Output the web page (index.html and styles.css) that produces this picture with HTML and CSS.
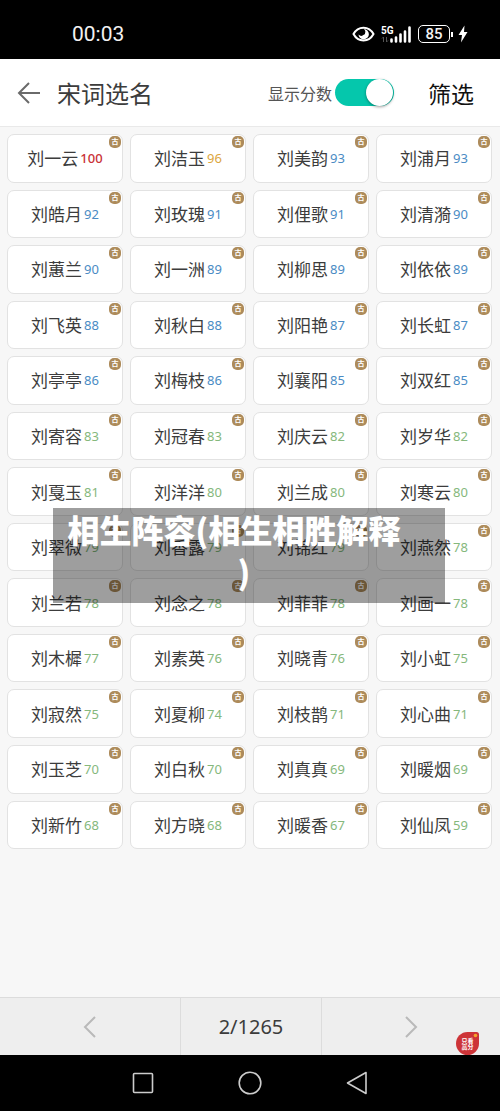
FILE: index.html
```html
<!DOCTYPE html>
<html lang="zh-CN">
<head>
  <meta charset="UTF-8">
  <meta name="viewport" content="width=device-width, initial-scale=1.0">
  <title>宋词选名</title>
  <link rel="stylesheet" href="styles.css">
</head>
<body>
  <div class="status-bar">
    <span class="clock">00:03</span>
    <div class="status-icons">
      <svg width="23" height="16" viewBox="0 0 23 16">
        <path d="M1.500 8C6 -0.500 17 -0.500 21.500 8C17 16.500 6 16.500 1.500 8Z" fill="none" stroke="#fff" stroke-width="2"/>
        <path d="M12 3a5.200 5.200 0 1 1-5.500 5.500a3.500 3.500 0 0 0 5.500-5.500Z" fill="#fff"/>
        <circle cx="12" cy="7.500" r="1" fill="#000"/>
      </svg>
      <svg width="31" height="18" viewBox="0 0 31 18">
        <text class="network" x="0" y="9">5G</text>
        <path d="M2.500 17v-5M1 13.500l1.500-1.500M5.500 12v5M7 15.500l-1.500 1.500" fill="none" stroke="#555"/>
        <path d="M10.500 16.500v-2M15 16.500v-4M19.500 16.500v-7M24 16.500v-10M28.500 16.500v-14" stroke="#fff" stroke-width="2.600" stroke-linecap="round"/>
      </svg>
      <span class="battery">85</span>
      <svg width="10" height="18" viewBox="0 0 10 18">
        <path d="M6.500 0.500L0.500 10H4L3 17.500L9.500 7H6Z" fill="#fff"/>
      </svg>
    </div>
  </div>

  <header class="header">
    <button class="back" type="button" aria-label="返回">
      <svg width="24" height="24" viewBox="0 0 24 24">
        <path d="M23 12H2M12 2L2 12L12 22" fill="none" stroke="#6a6a6a" stroke-width="2"/>
      </svg>
    </button>
    <h1>宋词选名</h1>
    <label class="score-label" for="showScore">显示分数</label>
    <input class="switch" type="checkbox" id="showScore" checked>
    <button class="filter" type="button">筛选</button>
  </header>

  <main class="content">
    <ul class="names" id="names"></ul>
  </main>

  <div class="caption"><span class="caption-line">相生阵容(相生相胜解释</span><br>)</div>

  <footer class="pager">
    <button class="prev" type="button" aria-label="上一页">
      <svg width="14" height="22" viewBox="0 0 14 22">
        <path d="M12 1L2 11L12 21" fill="none" stroke="#b9b9b9" stroke-width="2"/>
      </svg>
    </button>
    <span class="page">2/1265</span>
    <button class="next" type="button" aria-label="下一页">
      <svg width="14" height="22" viewBox="0 0 14 22">
        <path d="M2 1L12 11L2 21" fill="none" stroke="#b9b9b9" stroke-width="2"/>
      </svg>
    </button>
    <button class="high-score" type="button">
      <svg width="23" height="23" viewBox="0 0 23 23">
        <path d="M11.500 0H20.500Q23 0 23 2.500V11.500A11.500 11.500 0 1 1 11.500 0Z" fill="#cd3438"/>
        <circle cx="19.500" cy="3.500" r="1.800" fill="#f4a52a"/>
        <text x="11.500" y="11">只看</text>
        <text x="11.500" y="17">高分</text>
      </svg>
    </button>
  </footer>

  <nav class="system-nav">
    <button type="button" aria-label="最近任务">
      <svg width="24" height="24" viewBox="0 0 24 24"><rect x="2.500" y="2.500" width="19" height="19" rx="1" fill="none" stroke="#ccc" stroke-width="1.600"/></svg>
    </button>
    <button type="button" aria-label="主页">
      <svg width="24" height="24" viewBox="0 0 24 24"><circle cx="12" cy="12" r="10.800" fill="none" stroke="#ccc" stroke-width="1.600"/></svg>
    </button>
    <button type="button" aria-label="后退">
      <svg width="24" height="24" viewBox="0 0 24 24"><path d="M21 1.500V22.500L2.500 12Z" fill="none" stroke="#ccc" stroke-width="1.600" stroke-linejoin="round"/></svg>
    </button>
  </nav>

  <script>
    const names = [
      ['刘一云', 100], ['刘洁玉', 96], ['刘美韵', 93], ['刘浦月', 93],
      ['刘皓月', 92], ['刘玫瑰', 91], ['刘俚歌', 91], ['刘清漪', 90],
      ['刘蕙兰', 90], ['刘一洲', 89], ['刘柳思', 89], ['刘依依', 89],
      ['刘飞英', 88], ['刘秋白', 88], ['刘阳艳', 87], ['刘长虹', 87],
      ['刘亭亭', 86], ['刘梅枝', 86], ['刘襄阳', 85], ['刘双红', 85],
      ['刘寄容', 83], ['刘冠春', 83], ['刘庆云', 82], ['刘岁华', 82],
      ['刘戛玉', 81], ['刘洋洋', 80], ['刘兰成', 80], ['刘寒云', 80],
      ['刘翠微', 79], ['刘香露', 79], ['刘锦红', 79], ['刘燕然', 78],
      ['刘兰若', 78], ['刘念之', 78], ['刘菲菲', 78], ['刘画一', 78],
      ['刘木樨', 77], ['刘素英', 76], ['刘晓青', 76], ['刘小虹', 75],
      ['刘寂然', 75], ['刘夏柳', 74], ['刘枝鹊', 71], ['刘心曲', 71],
      ['刘玉芝', 70], ['刘白秋', 70], ['刘真真', 69], ['刘暖烟', 69],
      ['刘新竹', 68], ['刘方晓', 68], ['刘暖香', 67], ['刘仙凤', 59]
    ];

    // 分数对应的颜色
    function level(score) {
      if (score === 100) return 'top';
      if (score > 95) return 'gold';
      if (score > 84) return 'blue';
      return 'green';
    }

    const list = document.getElementById('names');

    names.forEach(([name, score]) => {
      const item = document.createElement('li');
      item.innerHTML = `
        <a class="card" href="#">
          <span class="name">${name}</span>
          <span class="score ${level(score)}">${score}</span>
          <span class="badge">古</span>
        </a>
      `;
      list.appendChild(item);
    });

    // 显示或隐藏分数
    document.getElementById('showScore').addEventListener('change', function() {
      list.classList.toggle('no-scores', !this.checked);
    });
  </script>
</body>
</html>
```
FILE: styles.css
```css
* {
  box-sizing: border-box;
}
body {
  position: relative;
  display: flex;
  flex-direction: column;
  min-height: 100vh;
  margin: 0;
  background-color: #f7f7f7;
  color: #3c3c3c;
  font-family: "Noto Sans", "Noto Sans CJK SC", sans-serif;
}
button {
  padding: 0;
  border: none;
  background: none;
  color: inherit;
  font-family: inherit;
  cursor: pointer;
}
svg {
  display: block;
}
.status-bar {
  display: flex;
  align-items: center;
  justify-content: space-between;
  height: 59px;
  padding: 9px 32px 0 72px;
  background-color: #000;
  color: #f2f2f2;
}
.clock {
  font-family: Roboto, sans-serif;
  font-size: 21px;
}
.status-icons {
  display: flex;
  align-items: center;
  gap: 6px;
}
.network {
  fill: #fff;
  font-family: Roboto, sans-serif;
  font-size: 10px;
  font-weight: bold;
}
.battery {
  position: relative;
  width: 32px;
  margin-right: 2px;
  border: 1px solid #fff;
  border-radius: 5px;
  font-family: Roboto, sans-serif;
  font-size: 15px;
  font-weight: 500;
  line-height: 16px;
  text-align: center;
}
.battery::after {
  content: "";
  position: absolute;
  top: 6px;
  right: -4px;
  width: 2px;
  height: 5px;
  background-color: #fff;
}
.header {
  display: flex;
  align-items: center;
  height: 68px;
  padding: 0 26px 0 17px;
  border-bottom: 1px solid #e9e9e9;
  background-color: #fff;
}
.header h1 {
  margin: 0 auto 0 16px;
  font-size: 24px;
  font-weight: normal;
}
.score-label {
  color: #555;
  font-size: 16px;
}
.switch {
  appearance: none;
  width: 59px;
  height: 27px;
  margin: 0 34px 0 3px;
  border-radius: 14px;
  background-color: #bbb;
  cursor: pointer;
}
.switch::before {
  content: "";
  display: block;
  width: 27px;
  height: 27px;
  border-radius: 50%;
  background-color: #fff;
  box-shadow: 0 1px 3px rgba(0, 0, 0, 0.4);
}
.switch:checked {
  background-color: #05c7ac;
}
.switch:checked::before {
  margin-left: 31px;
}
.filter {
  color: #111;
  font-size: 23px;
}
.content {
  flex: 1;
  padding: 7px 8px 7px 7px;
}
.names {
  display: grid;
  grid-template-columns: repeat(4, 1fr);
  gap: 7px;
  margin: 0;
  padding: 0;
  list-style: none;
}
.card {
  position: relative;
  display: flex;
  align-items: center;
  justify-content: center;
  gap: 2px;
  aspect-ratio: 43 / 18;
  border: 1px solid #e2e2e2;
  border-radius: 7px;
  background-color: #fff;
  color: #3c3c3c;
  text-decoration: none;
}
.name {
  padding-top: 2px;
  font-size: 17px;
  line-height: 24px;
}
.score {
  font-size: 13px;
  line-height: 24px;
}
.top {
  color: #c93136;
  font-weight: 500;
}
.gold {
  color: #dca640;
}
.blue {
  color: #4a8bc4;
}
.green {
  color: #85b87c;
}
.no-scores .score {
  display: none;
}
.badge {
  position: absolute;
  top: 1px;
  right: 1px;
  width: 12px;
  height: 12px;
  border-radius: 5px;
  background-color: #ad8b5b;
  color: #fff;
  font-size: 7px;
  font-weight: bold;
  line-height: 12px;
  text-align: center;
}
.caption {
  position: absolute;
  top: 508px;
  right: 55px;
  left: 53px;
  padding: 0 10px 11px 0;
  background-color: rgba(0, 0, 0, 0.38);
  color: #fff;
  font-family: "Noto Sans CJK SC", sans-serif;
  font-size: 32px;
  font-weight: 900;
  line-height: 42px;
  text-align: center;
}
.caption-line {
  padding-right: 20px;
}
.pager {
  position: relative;
  display: grid;
  grid-template-columns: 180fr 142fr 178fr;
  height: 58px;
  border-top: 1px solid #dcdcdc;
  background-color: #eee;
}
.prev,
.next {
  display: flex;
  align-items: center;
  justify-content: center;
}
.page {
  border: 1px solid #dcdcdc;
  border-width: 0 1px;
  font-size: 20px;
  line-height: 57px;
  text-align: center;
}
.high-score {
  position: absolute;
  right: 21px;
  bottom: 0;
}
.high-score text {
  fill: #fff;
  font-size: 6px;
  font-weight: bold;
  text-anchor: middle;
}
.system-nav {
  display: flex;
  align-items: center;
  justify-content: center;
  gap: 83px;
  height: 56px;
  background-color: #000;
}
```
